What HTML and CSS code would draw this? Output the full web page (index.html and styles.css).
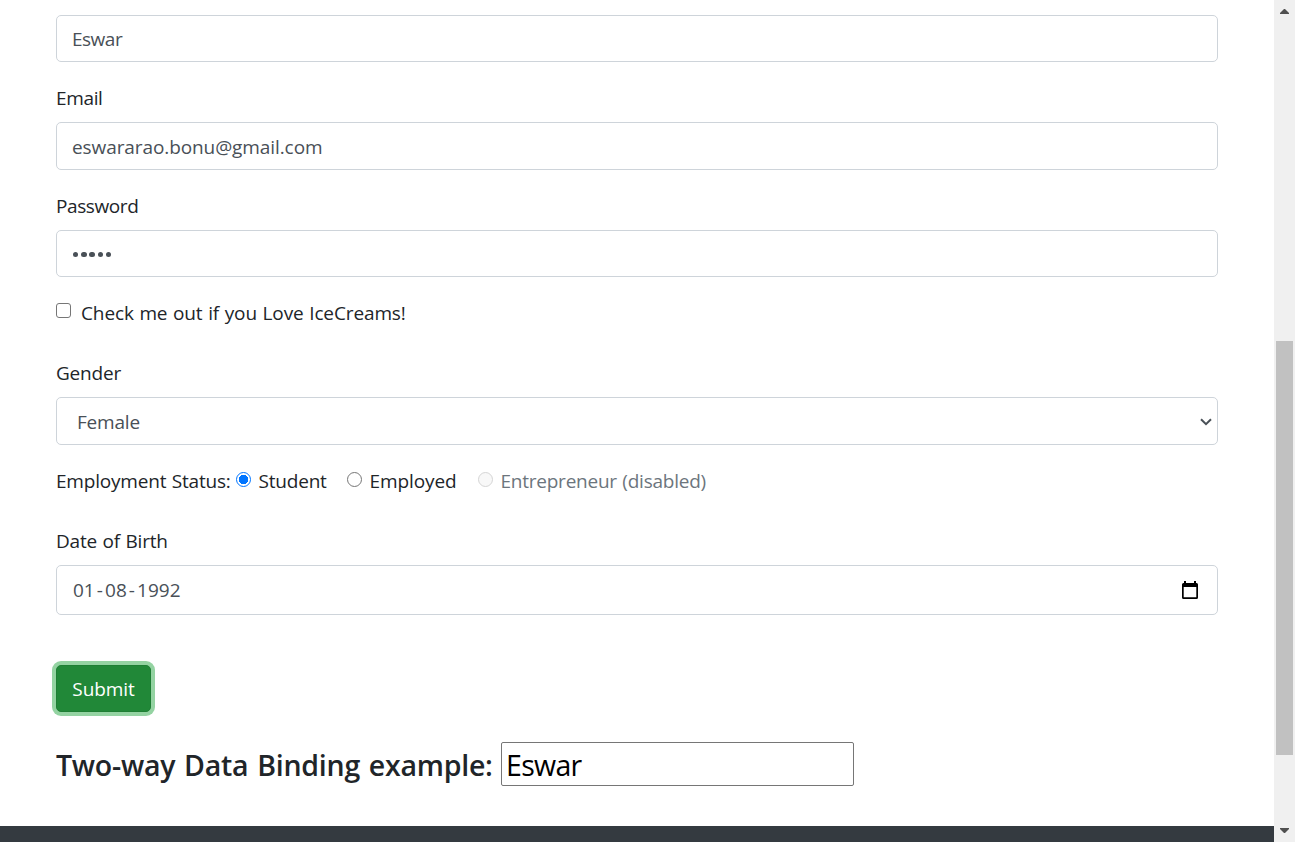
FILE: index.html
```html
<!DOCTYPE html>
<html lang="en">
<head>
<meta charset="utf-8">
<title>Registration form</title>
<link rel="stylesheet" href="styles.css">
</head>
<body>
<div class="viewport">
  <main class="page">
    <form class="form">
      <div class="group">
        <div class="control"><span class="t-name">Eswar</span></div>
      </div>
      <div class="group">
        <label class="label t-email">Email</label>
        <div class="control"><span class="t-address">eswararao.bonu@gmail.com</span></div>
      </div>
      <div class="group">
        <label class="label t-password">Password</label>
        <div class="control dots"><i></i><i></i><i></i><i></i><i></i></div>
      </div>
      <label class="check-row"><input type="checkbox" class="box"><span class="t-check">Check me out if you Love IceCreams!</span></label>
      <div class="group">
        <label class="label">Gender</label>
        <div class="control select"><span>Female</span>
          <svg class="chevron" width="14" height="10" viewBox="0 0 14 10"><path d="M2 2.200 L7 7.200 L12 2.200" fill="none" stroke="#495057" stroke-width="2"/></svg>
        </div>
      </div>
      <div class="radios">
        <span class="t-status">Employment Status:</span>
        <label class="option student"><input type="radio" name="status" class="radio" checked><span>Student</span></label>
        <label class="option employed"><input type="radio" name="status" class="radio"><span class="t-employed">Employed</span></label>
        <label class="option muted"><input type="radio" name="status" class="radio" disabled><span class="t-entrepreneur">Entrepreneur (disabled)</span></label>
      </div>
      <div class="group birth">
        <label class="label t-dob">Date of Birth</label>
        <div class="control date"><span class="date-value"><span>01</span><b>-</b><span>08</span><b>-</b><span>1992</span></span>
          <svg class="calendar" width="16" height="18" viewBox="0 0 16 18"><path d="M2 0h2v2h8V0h2v2h.5Q16 2 16 3.500V16.500Q16 18 14.500 18H1.500Q0 18 0 16.500V3.500Q0 2 1.500 2H2ZM1.700 6v10.300h12.600V6Z" fill="#000" fill-rule="evenodd"/></svg>
        </div>
      </div>
      <button type="button" class="submit">Submit</button>
    </form>
    <h4 class="binding"><span class="t-binding">Two-way Data Binding example:</span><span class="plain">Eswar</span></h4>
    <footer class="footer"></footer>
  </main>
  <aside class="scrollbar">
    <svg width="9" height="5" viewBox="0 0 9 5"><path d="M0 5V4L4 0h1l4 4v1Z" fill="#505050"/></svg>
    <div class="track"><div class="thumb"></div></div>
    <svg width="9" height="5" viewBox="0 0 9 5"><path d="M0 0v1l4 4h1l4-4V0Z" fill="#505050"/></svg>
  </aside>
</div>
</body>
</html>
```
FILE: styles.css
```css
* { box-sizing: border-box; }
body {
  margin: 0;
  overflow: hidden;
  background: #fff;
  color: #212529;
  font: 370 19px/30px "Open Sans", "Noto Sans", sans-serif;
  letter-spacing: -0.2px;
  word-spacing: 0.8px;
}
.viewport { display: grid; grid-template-columns: 1274px 21px; height: 842px; }
.page { display: flex; flex-direction: column; padding-top: 14.600px; }
.form { display: flex; flex-direction: column; padding: 0 56px; }
.group { margin-bottom: 20px; }
.label { display: block; margin-bottom: 8px; line-height: 32px; white-space: nowrap; }
.control {
  display: flex;
  align-items: center;
  height: 47.500px;
  padding: 1.800px 15px 0;
  border: 1px solid #ced4da;
  border-radius: 5px;
  color: #495057;
  white-space: nowrap;
}
.dots { gap: 2.800px; padding-left: 16px; }
.dots i { width: 5.400px; height: 5.400px; border-radius: 50%; background: #495057; }
.check-row { display: flex; align-items: center; height: 32px; margin-bottom: 28px; }
.box {
  appearance: none;
  width: 15px;
  height: 15px;
  margin: 0 10px 5px 0;
  border: 1.250px solid #767676;
  border-radius: 3px;
  background: #fff;
}
.select { justify-content: space-between; padding: 1.800px 4px 0 20px; }
.chevron { margin-top: 0.500px; }
.radios { display: flex; align-items: center; height: 32px; margin-bottom: 28px; white-space: nowrap; }
.option { display: flex; align-items: center; }
.radio {
  appearance: none;
  width: 15px;
  height: 15px;
  margin: 0 7.500px 2.600px 0;
  border: 1px solid #767676;
  border-radius: 50%;
}
.radio:checked { border: 1.500px solid #0075ff; background: radial-gradient(circle, #0075ff 4.500px, #fff 5px); }
.radio:disabled { border-color: #d5d5d5; background: #f8f8f8; }
.muted { color: #6c757d; }
.t-name { letter-spacing: -0.500px; }
.t-email { letter-spacing: -0.350px; }
.t-address { letter-spacing: -0.090px; }
.t-password { letter-spacing: -0.400px; }
.t-check { letter-spacing: -0.120px; }
.t-employed { letter-spacing: -0.1px; }
.t-entrepreneur { letter-spacing: -0.240px; }
.t-dob { letter-spacing: -0.2px; }
.t-status { width: 180px; }
.student { width: 111px; }
.employed { width: 131px; }
.date { justify-content: space-between; height: 50px; padding: 0.400px 19px 0 16px; }
.date-value { display: flex; letter-spacing: 0; }
.date-value b { width: 10.300px; text-align: center; font-weight: 370; }
.birth { margin-bottom: 50.400px; }
.submit {
  width: 95px;
  height: 47px;
  padding: 1.500px 0 0;
  border: 1px solid #1e7e34;
  border-radius: 5px;
  background: #218838;
  box-shadow: 0 0 0 4px #94d3a2;
  color: #fff;
  font: inherit;
  font-weight: 400;
  letter-spacing: -0.1px;
}
.binding {
  display: flex;
  align-items: center;
  height: 44px;
  margin: 30px 0 40px;
  padding-left: 56px;
  font-size: 28.500px;
  font-weight: 600;
  line-height: 44px;
  white-space: nowrap;
}
.t-binding { width: 445px; padding-top: 2px; letter-spacing: -0.240px; word-spacing: 1.700px; }
.plain {
  display: flex;
  align-items: center;
  width: 353px;
  height: 44px;
  padding: 2px 0 0 4px;
  border: 1px solid #767676;
  border-radius: 2px;
  color: #000;
  font-weight: 370;
  letter-spacing: -0.700px;
}
.footer { flex: 1; background: #343a40; }
.scrollbar {
  display: flex;
  flex-direction: column;
  align-items: center;
  padding: 9px 0;
  background: #f0f0f0;
}
.track { flex: 1; align-self: stretch; padding: 327px 2px 0; }
.thumb { height: 414px; background: #c1c1c1; }
```
